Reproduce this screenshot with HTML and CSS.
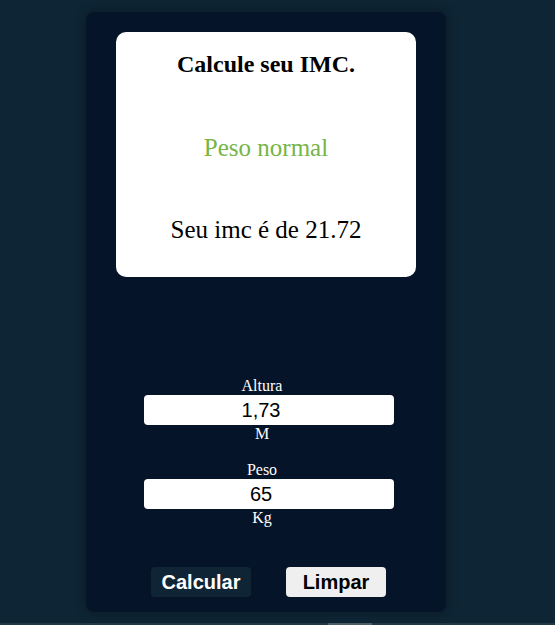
FILE: index.html
```html
<!DOCTYPE html>
<html lang="pt-BR">
<head>
<meta charset="utf-8">
<title>Calcule seu IMC</title>
<link rel="stylesheet" href="styles.css">
</head>
<body>
<main class="page">
  <section class="card">
    <div class="result">
      <h1 class="title">Calcule seu IMC.</h1>
      <p class="status">Peso normal</p>
      <p class="value">Seu imc é de 21.72</p>
    </div>
    <form class="form">
      <label class="label" for="altura">Altura</label>
      <input class="field" id="altura" type="text" value="1,73">
      <span class="unit">M</span>
      <label class="label label-peso" for="peso">Peso</label>
      <input class="field" id="peso" type="text" value="65">
      <span class="unit">Kg</span>
      <div class="actions">
        <button type="button" class="btn btn-dark">Calcular</button>
        <button type="button" class="btn btn-light">Limpar</button>
      </div>
    </form>
  </section>
</main>
<div class="hscroll"><div class="hscroll-thumb"></div></div>
</body>
</html>
```

FILE: styles.css
```css
html, body {
  margin: 0;
  padding: 0;
  height: 100%;
}
body {
  background: #0e2535;
  font-family: "Liberation Serif", "Times New Roman", serif;
  overflow: hidden;
}
.page {
  display: flex;
  justify-content: center;
  padding-right: 23px;
  padding-top: 12px;
}
.card {
  width: 360px;
  height: 600px;
  box-sizing: border-box;
  background: #06142a;
  border-radius: 8px;
  box-shadow: 0 0 12px rgba(0, 0, 0, 0.35);
  padding: 20px 30px 15px;
  display: flex;
  flex-direction: column;
}
.result {
  background: #ffffff;
  border-radius: 10px;
  height: 245px;
  box-sizing: border-box;
  padding: 19px 0 0;
  text-align: center;
}
.title {
  margin: 0;
  font-size: 24px;
  line-height: 27px;
  font-weight: bold;
  color: #000;
}
.status {
  margin: 56px 0 0;
  font-size: 25px;
  line-height: 28px;
  color: #76b546;
}
.value {
  margin: 54px 0 0;
  font-size: 25px;
  line-height: 28px;
  color: #000;
}
.form {
  margin-top: 100px;
  display: flex;
  flex-direction: column;
  align-items: center;
  padding-right: 8px;
  color: #ffffff;
}
.label {
  font-size: 16px;
  line-height: 18px;
}
.label-peso {
  margin-top: 18px;
}
.field {
  width: 250px;
  height: 30px;
  box-sizing: border-box;
  margin: 0 0 0 14px;
  border: none;
  border-radius: 4px;
  background: #ffffff;
  padding: 0 16px 0 0;
  text-align: center;
  font-family: "Liberation Sans", Arial, sans-serif;
  font-size: 20px;
  color: #000;
  outline: none;
}
.unit {
  font-size: 16px;
  line-height: 18px;
}
.actions {
  margin-top: 40px;
  display: flex;
  gap: 35px;
  padding-left: 13px;
}
.btn {
  width: 100px;
  height: 30px;
  border: none;
  border-radius: 4px;
  font-family: "Liberation Sans", Arial, sans-serif;
  font-weight: bold;
  font-size: 20px;
  padding: 0;
  cursor: pointer;
}
.btn-dark {
  background: #0f2535;
  color: #ffffff;
}
.btn-light {
  background: #efefef;
  color: #000;
}
.hscroll {
  position: fixed;
  left: 0;
  right: 0;
  bottom: 0;
  height: 2px;
  background: #223845;
}
.hscroll-thumb {
  position: absolute;
  left: 328px;
  width: 44px;
  top: 0;
  bottom: 0;
  background: #4d5d66;
}
```
